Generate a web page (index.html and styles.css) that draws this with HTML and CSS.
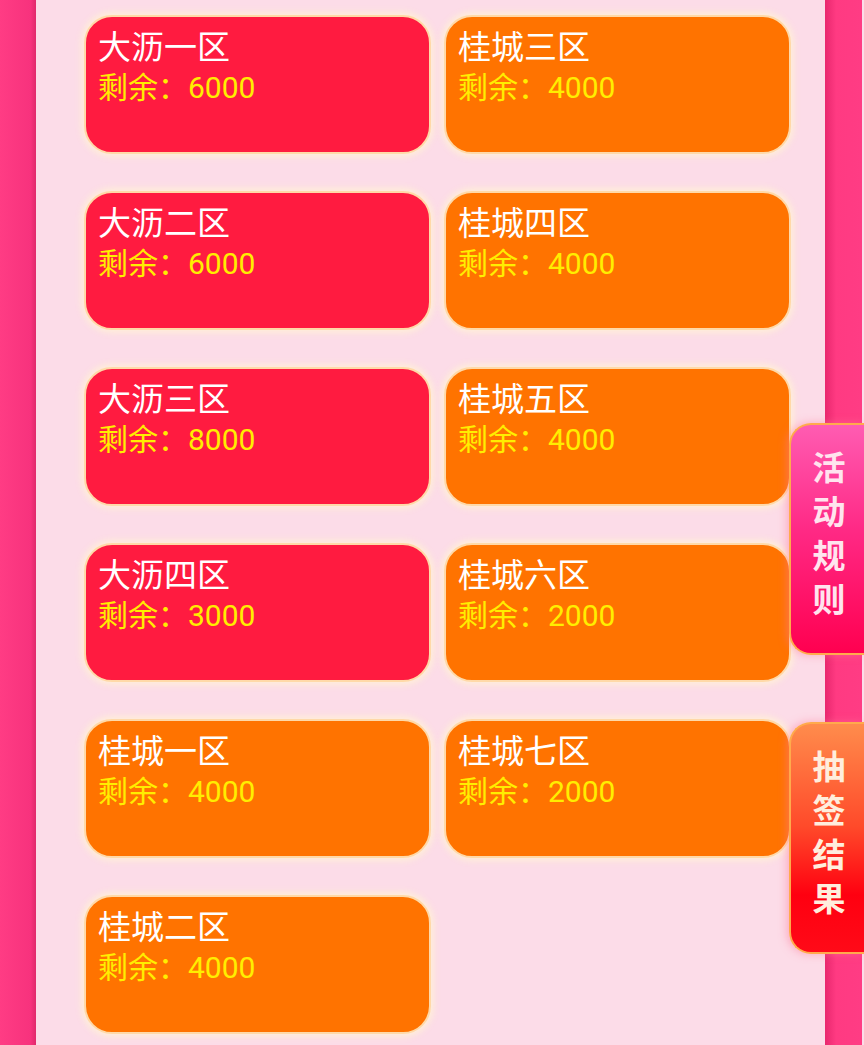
FILE: index.html
```html
<!DOCTYPE html>
<html>

<head>
	<meta charset="UTF-8">
	<meta name="viewport" content="width=device-width, initial-scale=1">
	<title>抽签活动</title>
	<link rel="stylesheet" href="styles.css">
</head>

<body>
	<div class="page">
		<div class="edge edge-left"></div>
		<main class="panel">
			<div class="area-grid">
				<div class="area-card red"><p class="area-name">大沥一区</p><p class="area-left">剩余：6000</p></div>
				<div class="area-card orange"><p class="area-name">桂城三区</p><p class="area-left">剩余：4000</p></div>
				<div class="area-card red"><p class="area-name">大沥二区</p><p class="area-left">剩余：6000</p></div>
				<div class="area-card orange"><p class="area-name">桂城四区</p><p class="area-left">剩余：4000</p></div>
				<div class="area-card red"><p class="area-name">大沥三区</p><p class="area-left">剩余：8000</p></div>
				<div class="area-card orange"><p class="area-name">桂城五区</p><p class="area-left">剩余：4000</p></div>
				<div class="area-card red"><p class="area-name">大沥四区</p><p class="area-left">剩余：3000</p></div>
				<div class="area-card orange"><p class="area-name">桂城六区</p><p class="area-left">剩余：2000</p></div>
				<div class="area-card orange"><p class="area-name">桂城一区</p><p class="area-left">剩余：4000</p></div>
				<div class="area-card orange"><p class="area-name">桂城七区</p><p class="area-left">剩余：2000</p></div>
				<div class="area-card orange"><p class="area-name">桂城二区</p><p class="area-left">剩余：4000</p></div>
			</div>
		</main>
		<div class="edge edge-right"></div>
		<div class="edge-tail"></div>
	</div>

	<div class="side-tab tab-rules">活动规则</div>
	<div class="side-tab tab-result">抽签结果</div>
</body>

</html>
```

FILE: styles.css
```css
body{
	margin: 0;
	width: 864px;
	height: 1045px;
	overflow: hidden;
	background-color: #fcdce8;
	font-family: Roboto, "Noto Sans CJK SC", sans-serif;
}

.page{
	display: flex;
	height: 1045px;
}

.edge{
	height: 100%;
}

.edge-left{
	width: 36px;
	background: linear-gradient(to right, #ff3c84, #f7327d 85%, #e02a6c);
}

.edge-right{
	width: 37px;
	background: linear-gradient(to right, #e8286e, #ff3a82 30%, #ff3c84);
}

.edge-tail{
	width: 2px;
	background-color: #fcdce8;
}

.panel{
	flex: 1;
	background-color: #fcdce8;
	padding: 15px 33px 0 48px;
}

.area-grid{
	display: grid;
	grid-template-columns: 347px 347px;
	grid-auto-rows: 139px;
	column-gap: 13px;
	row-gap: 37px;
}

.area-card{
	border-radius: 28px;
	border: 2px solid #ffd9a8;
	box-shadow: 0 0 6px 3px rgba(255, 240, 215, 0.9);
	padding: 10px 12px;
	box-sizing: border-box;
}

.red{
	background-color: #ff1b40;
}

.orange{
	background-color: #ff7300;
}

.area-name{
	margin: 0;
	color: #ffffff;
	font-size: 33px;
	line-height: 41px;
}

.area-left{
	margin: 0;
	color: #ffee00;
	font-size: 30px;
	line-height: 40px;
}

.side-tab{
	position: absolute;
	right: 0;
	width: 36px;
	height: 228px;
	padding: 0 17px 0 20px;
	border: 2px solid #ffaa4c;
	border-right: none;
	border-radius: 22px 0 0 22px;
	box-shadow: -2px 0 8px rgba(255, 120, 150, 0.5);
	display: flex;
	align-items: center;
	justify-content: center;
	font-family: "Noto Sans CJK SC", sans-serif;
	font-size: 33px;
	font-weight: bold;
	line-height: 36px;
	writing-mode: vertical-rl;
	letter-spacing: 11px;
}

.tab-rules{
	top: 423px;
	color: #ffe4ee;
	background: linear-gradient(to bottom, #ff5cb2, #ff2a86 45%, #ff0050);
}

.tab-result{
	top: 722px;
	color: #ffeedd;
	background: linear-gradient(to bottom, #ff8c4c, #ff4a2a 45%, #ff0010 75%, #ff0a18);
}
```
